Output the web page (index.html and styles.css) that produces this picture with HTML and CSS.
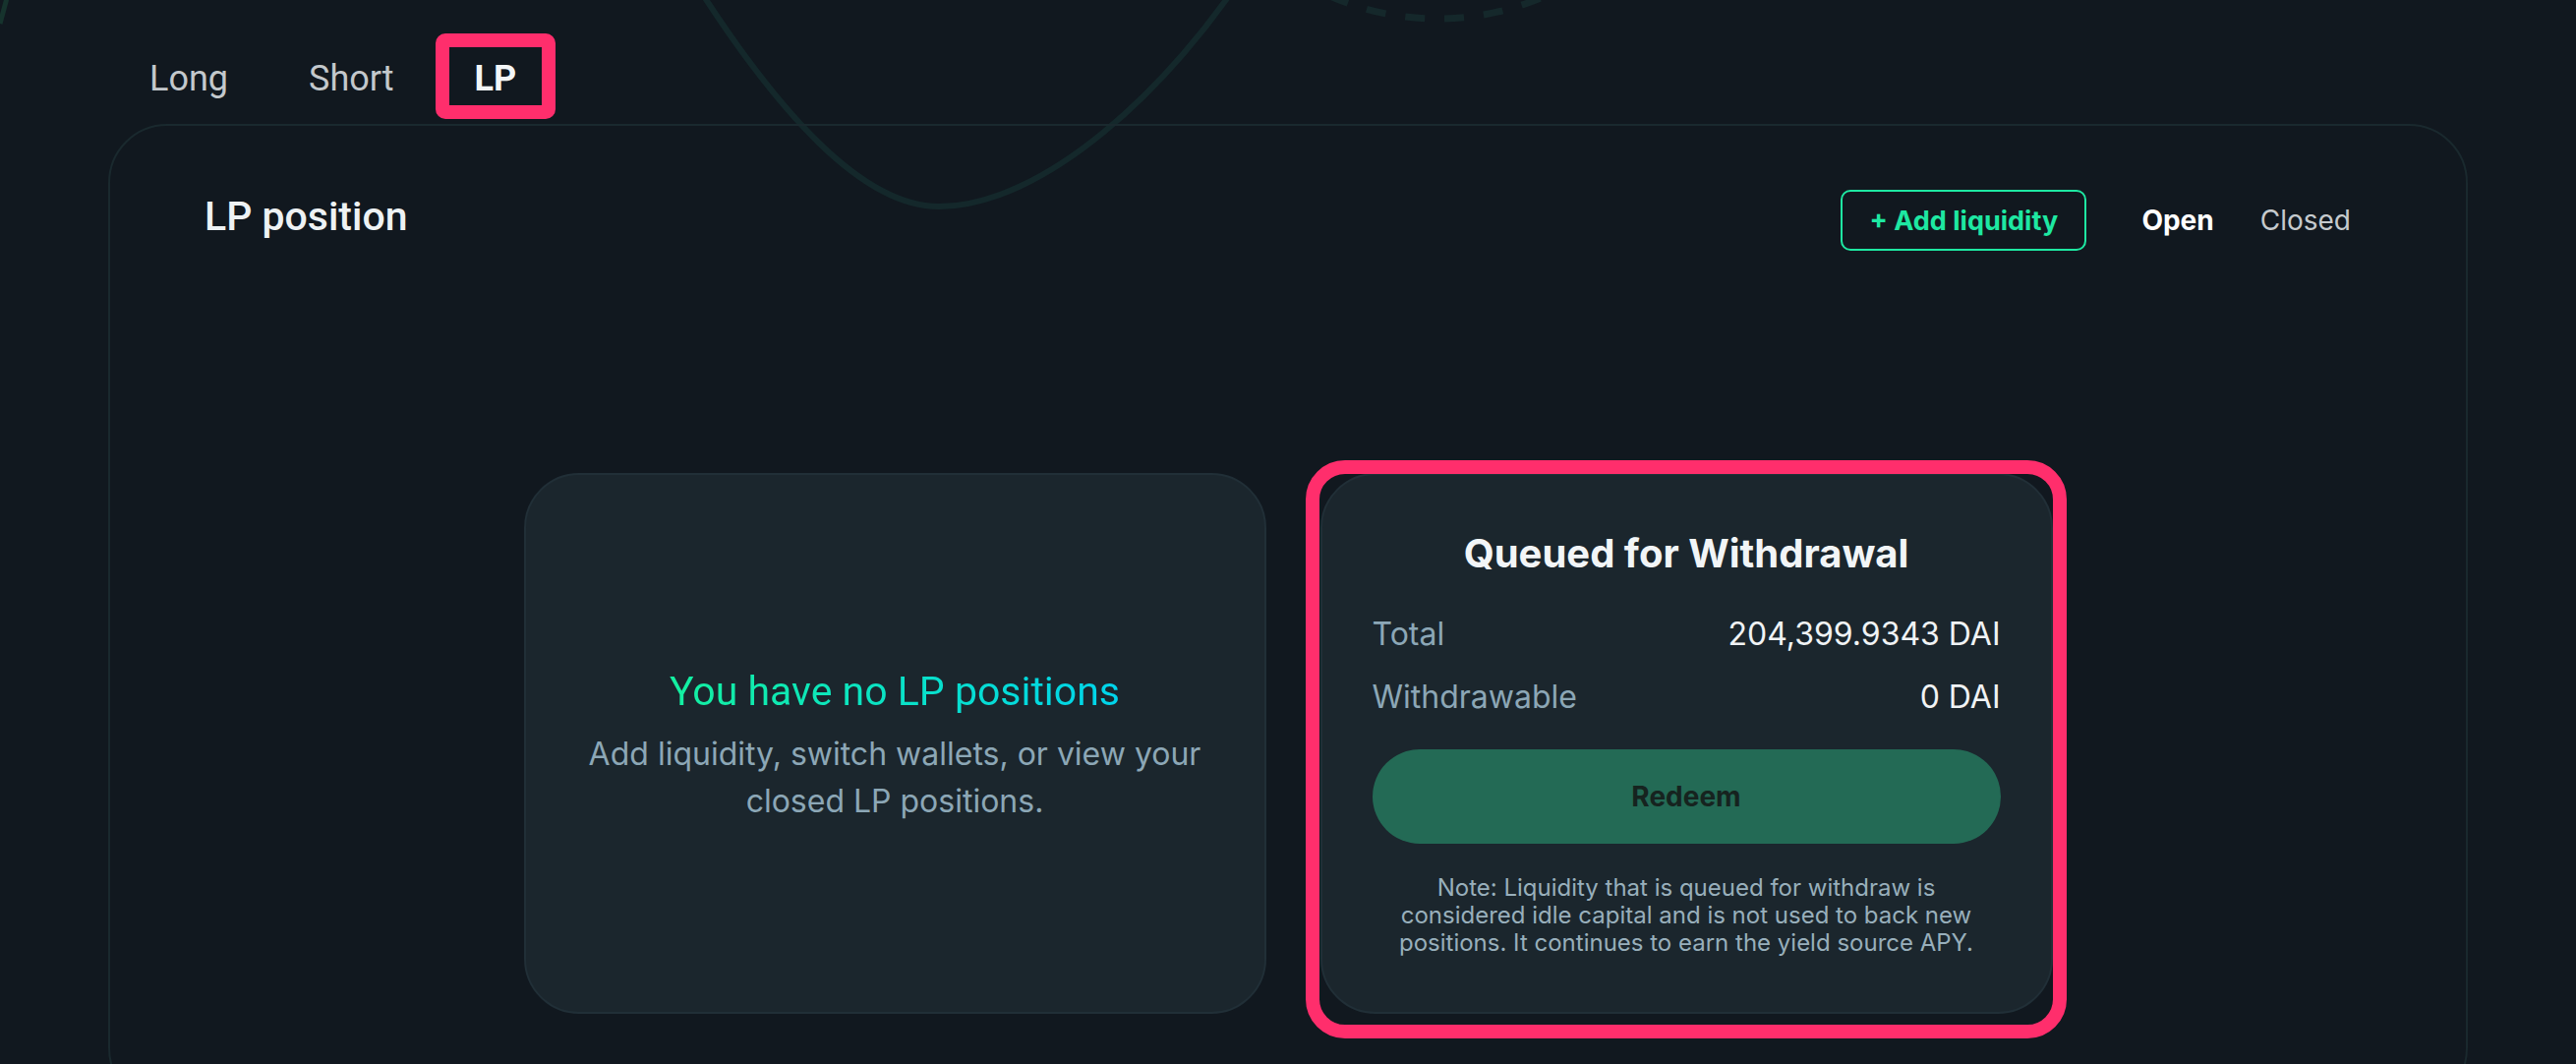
FILE: index.html
```html
<!DOCTYPE html>
<html lang="en">
<head>
<meta charset="utf-8">
<title>LP position</title>
<link rel="stylesheet" href="styles.css">
</head>
<body>
<svg class="deco" width="2620" height="1082" viewBox="0 0 2620 1082" aria-hidden="true">
  <path class="deco-curve" d="M 693 -40 C 793 122, 880 210, 955 210 C 1060 210, 1190 92, 1274 -40"/>
  <circle class="deco-dash" cx="1462" cy="-253" r="272"/>
  <path class="deco-corner" d="M 0 24 L 7 -2"/>
</svg>
<div class="page">
  <nav class="tabs">
    <span class="tab">Long</span>
    <span class="tab">Short</span>
    <span class="tab tab-active">LP</span>
  </nav>
  <section class="panel">
    <header class="panel-head">
      <h1 class="panel-title">LP position</h1>
      <div class="panel-actions">
        <button class="btn-add">+ Add liquidity</button>
        <span class="filter filter-on">Open</span>
        <span class="filter">Closed</span>
      </div>
    </header>
    <div class="cards">
      <div class="card card-empty">
        <h2 class="empty-title">You have no LP positions</h2>
        <p class="empty-text">Add liquidity, switch wallets, or view your closed LP positions.</p>
      </div>
      <div class="card card-queue">
        <h2 class="queue-title">Queued for Withdrawal</h2>
        <div class="row"><span class="label">Total</span><span class="value">204,399.9343 DAI</span></div>
        <div class="row row-next"><span class="label">Withdrawable</span><span class="value">0 DAI</span></div>
        <button class="btn-redeem">Redeem</button>
        <p class="note">Note: Liquidity that is queued for withdraw is<br>considered idle capital and is not used to back new<br>positions. It continues to earn the yield source APY.</p>
      </div>
    </div>
  </section>
</div>
</body>
</html>
```
FILE: styles.css
```css
html, body {
  margin: 0;
  padding: 0;
}
body {
  width: 2620px;
  height: 1082px;
  overflow: hidden;
  position: relative;
  background: #11181f;
  font-family: Inter, "Noto Sans", sans-serif;
}
.deco {
  position: absolute;
  left: 0;
  top: 0;
  z-index: 0;
  pointer-events: none;
}
.deco-curve {
  fill: none;
  stroke: #14282b;
  stroke-width: 6;
}
.deco-dash {
  fill: none;
  stroke: #15282b;
  stroke-width: 7;
  stroke-dasharray: 20 20;
}
.deco-corner {
  fill: none;
  stroke: #16332d;
  stroke-width: 5;
}
.page {
  position: relative;
  z-index: 1;
  padding-left: 110px;
}
.tabs {
  display: flex;
  gap: 30px;
  padding: 48px 0 0 16px;
  height: 59px;
}
.tab {
  position: relative;
  padding: 4px 26px 0;
  height: 55px;
  line-height: 56px;
  font-family: Roboto, "Liberation Sans", sans-serif;
  font-size: 36px;
  color: #c3c8cc;
}
.tab-active {
  color: #f3f6f7;
  font-weight: 700;
}
.tab-active::after {
  content: "";
  position: absolute;
  left: -14px;
  top: -14px;
  right: -14px;
  bottom: -14px;
  border: 14px solid #ff2e6c;
  border-radius: 10px;
}
.panel {
  box-sizing: border-box;
  margin-top: 19px;
  width: 2400px;
  height: 1000px;
  border: 2px solid #1a292e;
  border-radius: 60px;
  padding-top: 65px;
}
.panel-head {
  display: flex;
  align-items: center;
  justify-content: space-between;
  height: 62px;
  padding: 0 117px 0 96px;
}
.panel-title {
  margin: 0;
  padding-bottom: 9px;
  font-family: Roboto, "Liberation Sans", sans-serif;
  font-weight: 500;
  font-size: 41px;
  line-height: 48px;
  color: #eef2f4;
}
.panel-actions {
  display: flex;
  align-items: center;
}
.btn-add {
  box-sizing: border-box;
  width: 250px;
  height: 62px;
  margin-right: 56px;
  border: 2px solid #1ee8a2;
  border-radius: 10px;
  background: transparent;
  color: #1ee8a2;
  font-family: Inter, sans-serif;
  font-weight: 700;
  font-size: 27px;
  padding: 0;
}
.filter {
  font-size: 28px;
  color: #c5cacd;
}
.filter-on {
  font-weight: 700;
  color: #ffffff;
  margin-right: 47px;
}
.cards {
  display: grid;
  grid-template-columns: 755px 745px;
  gap: 55px;
  justify-content: center;
  margin-top: 226px;
}
.card {
  box-sizing: border-box;
  height: 550px;
  background: #1b262d;
  border: 2px solid #212f37;
  border-radius: 56px;
}
.card-empty {
  display: flex;
  flex-direction: column;
  align-items: center;
  justify-content: center;
  text-align: center;
  padding-top: 6px;
}
.empty-title {
  margin: 0 0 16px;
  font-family: Roboto, "Liberation Sans", sans-serif;
  font-weight: 400;
  font-size: 41px;
  line-height: 48px;
  background: linear-gradient(90deg, #14f0a0 0%, #00d4ec 100%);
  -webkit-background-clip: text;
  background-clip: text;
  color: transparent;
}
.empty-text {
  margin: 0;
  max-width: 680px;
  font-size: 32px;
  line-height: 48px;
  color: #8ca7b6;
}
.card-queue {
  position: relative;
  padding: 56px 51px 0;
}
.card-queue::after {
  content: "";
  position: absolute;
  left: -17px;
  top: -15px;
  right: -16px;
  bottom: -27px;
  border: 14px solid #ff2e6c;
  border-radius: 40px;
}
.queue-title {
  margin: 0;
  text-align: center;
  font-size: 40px;
  font-weight: 700;
  line-height: 48px;
  color: #f2f5f7;
}
.row {
  display: flex;
  justify-content: space-between;
  margin-top: 38px;
  font-size: 32px;
  line-height: 40px;
}
.row-next {
  margin-top: 24px;
}
.label {
  color: #8ca7b6;
}
.value {
  color: #f0f3f5;
}
.btn-redeem {
  display: block;
  width: 100%;
  height: 96px;
  margin-top: 33px;
  border: 0;
  border-radius: 48px;
  background: #236a55;
  color: #16231f;
  font-family: Inter, sans-serif;
  font-weight: 700;
  font-size: 28px;
  padding: 0;
}
.note {
  margin: 31px 0 0;
  text-align: center;
  font-size: 24px;
  line-height: 28px;
  color: #98afbb;
}
```
